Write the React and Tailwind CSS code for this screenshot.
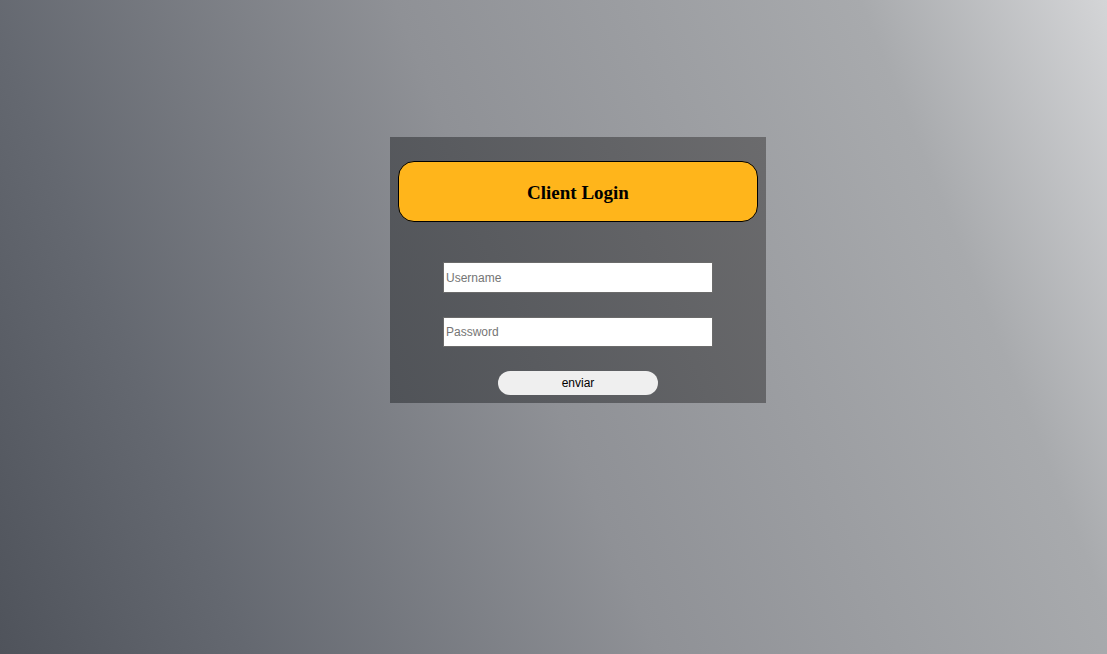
export default function App() {
  return (
    <div className="min-h-[654px] w-full bg-[linear-gradient(68deg,#4f535b_0%,#646870_18%,#8f9196_48%,#a8aaad_82%,#d4d5d7_100%)] pt-[137px] pl-[390px] font-['Liberation_Sans',Arial,sans-serif]">
      <div className="flex w-[376px] flex-col items-center bg-[linear-gradient(68deg,#505358,#6b6b6d)] px-2 pt-6 pb-2">
        <div className="flex h-[61px] w-full items-center justify-center rounded-2xl border border-black bg-[#ffb51b] pt-[3px]">
          <h1 className="font-['Liberation_Serif','Times_New_Roman',serif] text-[19px] font-bold text-black">
            Client Login
          </h1>
        </div>
        <input
          type="text"
          placeholder="Username"
          className="mt-10 h-[31px] w-[270px] border border-[#6b6b6b] bg-white px-[2px] text-[12px] text-black outline-none placeholder:text-[#757575]"
        />
        <input
          type="password"
          placeholder="Password"
          className="mt-6 h-[30px] w-[270px] border border-[#6b6b6b] bg-white px-[2px] text-[12px] text-black outline-none placeholder:text-[#757575]"
        />
        <button
          type="button"
          className="mt-6 h-6 w-40 rounded-full bg-[#efefef] text-[12px] text-black"
        >
          enviar
        </button>
      </div>
    </div>
  );
}
